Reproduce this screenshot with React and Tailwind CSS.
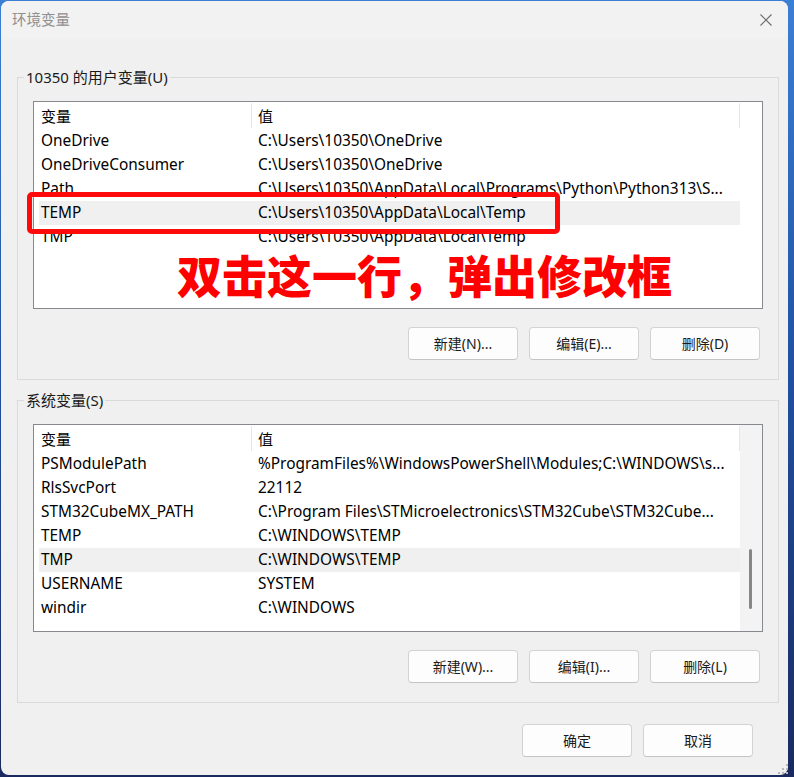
import React from "react";

const FONT = "font-['Noto_Sans','Noto_Sans_CJK_SC',sans-serif]";

function Btn({ children, w = "w-[110px]" }) {
  return (
    <button
      className={`${w} h-[33px] rounded-[4px] border border-[#d3d3d3] border-b-[#c4c4c4] bg-[#fdfdfd] text-[14px] text-[#1a1a1a] flex items-center justify-center`}
    >
      {children}
    </button>
  );
}

function VarList({ rows, selected, scrollbar, height }) {
  return (
    <div
      className={`relative w-[730px] ${height} border border-[#868a8e] bg-white flex`}
    >
      <div className="flex-1 flex flex-col pl-[5px]">
        <div className="h-[27px] flex text-[15px] text-black">
          <div className="w-[212px] pl-[2px] flex items-center pt-[1px]">变量</div>
          <div className="w-px bg-[#e6e6e6] my-[1px]" />
          <div className="flex-1 pl-[6px] flex items-center pt-[1px]">值</div>
          <div className="w-px bg-[#e6e6e6] my-[1px]" />
        </div>
        {rows.map(([k, v], i) => (
          <div
            key={i}
            className={`h-[24px] flex items-center text-[15.4px] text-black ${
              i === selected ? "bg-[#f0f0f0]" : ""
            }`}
          >
            <div className="w-[213px] pl-[2px] whitespace-nowrap overflow-hidden">{k}</div>
            <div className="flex-1 pl-[6px] whitespace-nowrap overflow-hidden">{v}</div>
          </div>
        ))}
      </div>
      {scrollbar ? (
        <div className="w-[22px] bg-[#f3f3f3] relative">
          <div className="absolute left-[9px] top-[124px] w-[3px] h-[60px] rounded-full bg-[#868686]" />
        </div>
      ) : (
        <div className="w-[22px]" />
      )}
    </div>
  );
}

export default function App() {
  const userRows = [
    ["OneDrive", "C:\\Users\\10350\\OneDrive"],
    ["OneDriveConsumer", "C:\\Users\\10350\\OneDrive"],
    ["Path", "C:\\Users\\10350\\AppData\\Local\\Programs\\Python\\Python313\\S..."],
    ["TEMP", "C:\\Users\\10350\\AppData\\Local\\Temp"],
    ["TMP", "C:\\Users\\10350\\AppData\\Local\\Temp"],
  ];
  const sysRows = [
    ["PSModulePath", "%ProgramFiles%\\WindowsPowerShell\\Modules;C:\\WINDOWS\\s..."],
    ["RlsSvcPort", "22112"],
    ["STM32CubeMX_PATH", "C:\\Program Files\\STMicroelectronics\\STM32Cube\\STM32Cube..."],
    ["TEMP", "C:\\WINDOWS\\TEMP"],
    ["TMP", "C:\\WINDOWS\\TEMP"],
    ["USERNAME", "SYSTEM"],
    ["windir", "C:\\WINDOWS"],
  ];
  return (
    <div
      className={`w-[794px] h-[777px] overflow-hidden bg-gradient-to-b from-[#3b7fd4] via-[#1f4f9e] to-[#1a2a60] pt-[1px] pl-[1px] ${FONT}`}
    >
      <div className="relative w-[787px] h-[774px] rounded-[8px] bg-[#f0f0f0] flex flex-col">
        {/* title bar */}
        <div className="h-[38px] flex items-center justify-between pl-[11px] pr-[14px] rounded-t-[8px] bg-[#f2f2f2]">
          <span className="text-[14.5px] text-[#8f8f8f]">环境变量</span>
          <svg width="14" height="14" viewBox="0 0 14 14" className="mr-[1px]">
            <path d="M1.5 1.5 L12.5 12.5 M12.5 1.5 L1.5 12.5" stroke="#6b6b6b" strokeWidth="1.1" />
          </svg>
        </div>

        {/* user vars */}
        <fieldset className="ml-[16px] mt-[28px] w-[762px] border border-[#dadada] px-[15px] pb-[19px] flex flex-col">
          <legend className="ml-[-9px] px-[2px] text-[15px] text-[#1a1a1a] leading-[20px]">
            10350 的用户变量(U)
          </legend>
          <div className="mt-[14px]">
            <VarList rows={userRows} selected={3} scrollbar={false} height="h-[208px]" />
          </div>
          <div className="mt-[18px] flex justify-end gap-[11px] pr-[3px]">
            <Btn>新建(N)...</Btn>
            <Btn>编辑(E)...</Btn>
            <Btn>删除(D)</Btn>
          </div>
        </fieldset>

        {/* system vars */}
        <fieldset className="ml-[16px] mt-[10px] w-[762px] border border-[#dadada] px-[15px] pb-[19px] flex flex-col">
          <legend className="ml-[-9px] px-[2px] text-[15px] text-[#1a1a1a] leading-[20px]">
            系统变量(S)
          </legend>
          <div className="mt-[14px]">
            <VarList rows={sysRows} selected={4} scrollbar={true} height="h-[208px]" />
          </div>
          <div className="mt-[18px] flex justify-end gap-[11px] pr-[3px]">
            <Btn>新建(W)...</Btn>
            <Btn>编辑(I)...</Btn>
            <Btn>删除(L)</Btn>
          </div>
        </fieldset>

        <div className="mt-[21px] flex justify-end gap-[11px] pr-[35px]">
          <Btn>确定</Btn>
          <Btn>取消</Btn>
        </div>

        {/* resize grip */}
        <svg className="absolute right-[0px] bottom-[1px]" width="10" height="10" viewBox="0 0 10 10">
          <rect x="8" y="0" width="2" height="2" fill="#b8b8b8" />
          <rect x="4" y="4" width="2" height="2" fill="#b8b8b8" />
          <rect x="8" y="4" width="2" height="2" fill="#b8b8b8" />
          <rect x="0" y="8" width="2" height="2" fill="#b8b8b8" />
          <rect x="4" y="8" width="2" height="2" fill="#b8b8b8" />
          <rect x="8" y="8" width="2" height="2" fill="#b8b8b8" />
        </svg>

        {/* annotation overlay */}
        <div className="absolute left-[26px] top-[191px] w-[533px] h-[42px] border-[5px] border-[#ff0a0a] rounded-[5px]" />
        <div className="absolute left-[176px] top-[244px] text-[45px] leading-[60px] font-black text-[#ff0000] whitespace-nowrap font-['Noto_Sans_CJK_SC',sans-serif] [text-shadow:0_0_2px_#fff]">
          双击这一行，弹出修改框
        </div>
      </div>
    </div>
  );
}
